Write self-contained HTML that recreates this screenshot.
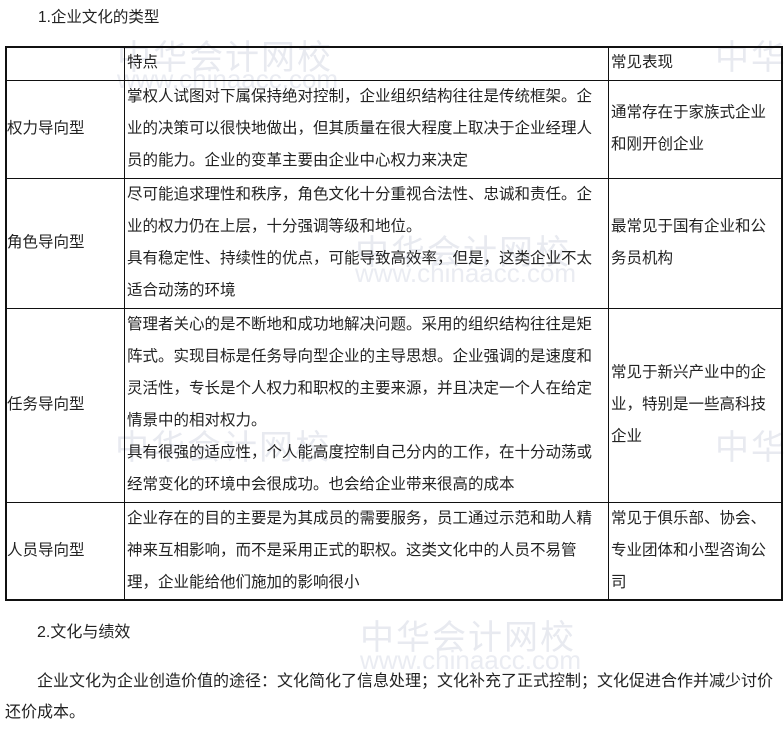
<!DOCTYPE html>
<html><head><meta charset="utf-8"><style>
body{margin:0;width:784px;height:725px;background:#fff;position:relative;overflow:hidden;font-family:"Liberation Sans","Noto Sans CJK SC",sans-serif;color:#222;font-size:15.5px}
.a{position:absolute;white-space:nowrap}
.wm{position:absolute;color:#e8eaf0;font-size:34px;letter-spacing:2px;white-space:nowrap}
.wu{position:absolute;color:#eaecf2;font-size:26px;white-space:nowrap}
.t{position:absolute;line-height:32px;white-space:nowrap}
.line{position:absolute;background:#111}
</style></head><body>
<div class="wm" style="left:117px;top:30px">中华会计网校</div>
<div class="wu" style="left:117px;top:64px">www.chinaacc.com</div>
<div class="wm" style="left:715px;top:30px">中华</div>
<div class="wm" style="left:355px;top:225px">中华会计网校</div>
<div class="wu" style="left:355px;top:258px">www.chinaacc.com</div>
<div class="wm" style="left:115px;top:420px">中华会计网校</div>
<div class="wm" style="left:715px;top:420px">中华</div>
<div class="wm" style="left:360px;top:610px">中华会计网校</div>
<div class="wu" style="left:360px;top:645px">www.chinaacc.com</div>

<div class="a" style="left:38px;top:5px">1.企业文化的类型</div>

<div class="line" style="left:5px;top:46px;width:777px;height:1.5px"></div>
<div class="line" style="left:5px;top:80px;width:777px;height:1px"></div>
<div class="line" style="left:5px;top:178px;width:777px;height:1px"></div>
<div class="line" style="left:5px;top:308px;width:777px;height:1px"></div>
<div class="line" style="left:5px;top:502px;width:777px;height:1px"></div>
<div class="line" style="left:5px;top:599px;width:777px;height:1.5px"></div>
<div class="line" style="left:5px;top:46px;width:1.5px;height:555px"></div>
<div class="line" style="left:124px;top:46px;width:1px;height:555px"></div>
<div class="line" style="left:608px;top:46px;width:1px;height:555px"></div>
<div class="line" style="left:781px;top:46px;width:1.5px;height:555px"></div>

<div class="t" style="left:127px;top:47px">特点</div>
<div class="t" style="left:611px;top:47px">常见表现</div>

<div class="t" style="left:7px;top:113px">权力导向型</div>
<div class="t" style="left:127px;top:81px">掌权人试图对下属保持绝对控制，企业组织结构往往是传统框架。企<br>业的决策可以很快地做出，但其质量在很大程度上取决于企业经理人<br>员的能力。企业的变革主要由企业中心权力来决定</div>
<div class="t" style="left:611px;top:97px">通常存在于家族式企业<br>和刚开创企业</div>

<div class="t" style="left:7px;top:227px">角色导向型</div>
<div class="t" style="left:127px;top:179px">尽可能追求理性和秩序，角色文化十分重视合法性、忠诚和责任。企<br>业的权力仍在上层，十分强调等级和地位。<br>具有稳定性、持续性的优点，可能导致高效率，但是，这类企业不太<br>适合动荡的环境</div>
<div class="t" style="left:611px;top:211px">最常见于国有企业和公<br>务员机构</div>

<div class="t" style="left:7px;top:389px">任务导向型</div>
<div class="t" style="left:127px;top:309px">管理者关心的是不断地和成功地解决问题。采用的组织结构往往是矩<br>阵式。实现目标是任务导向型企业的主导思想。企业强调的是速度和<br>灵活性，专长是个人权力和职权的主要来源，并且决定一个人在给定<br>情景中的相对权力。<br>具有很强的适应性，个人能高度控制自己分内的工作，在十分动荡或<br>经常变化的环境中会很成功。也会给企业带来很高的成本</div>
<div class="t" style="left:611px;top:357px">常见于新兴产业中的企<br>业，特别是一些高科技<br>企业</div>

<div class="t" style="left:7px;top:535px">人员导向型</div>
<div class="t" style="left:127px;top:503px">企业存在的目的主要是为其成员的需要服务，员工通过示范和助人精<br>神来互相影响，而不是采用正式的职权。这类文化中的人员不易管<br>理，企业能给他们施加的影响很小</div>
<div class="t" style="left:611px;top:503px">常见于俱乐部、协会、<br>专业团体和小型咨询公<br>司</div>

<div class="t" style="left:37px;top:617px;font-size:16px">2.文化与绩效</div>
<div class="t" style="left:37px;top:666px;font-size:16px">企业文化为企业创造价值的途径：文化简化了信息处理；文化补充了正式控制；文化促进合作并减少讨价</div>
<div class="t" style="left:5px;top:697px;font-size:16px">还价成本。</div>
</body></html>
